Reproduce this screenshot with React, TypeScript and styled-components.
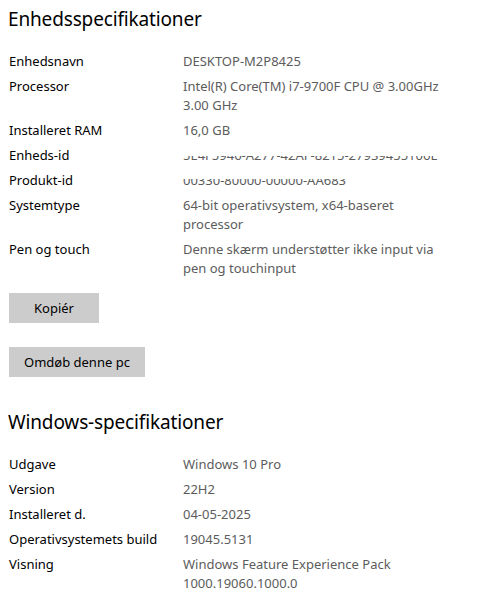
import React from 'react';
import styled, { createGlobalStyle } from 'styled-components';

const GlobalStyle = createGlobalStyle`
  html, body {
    margin: 0;
    padding: 0;
    background: #ffffff;
  }
  body {
    font-family: "Noto Sans", "Open Sans", sans-serif;
  }
`;

const Page = styled.div`
  width: 499px;
  height: 606px;
  overflow: hidden;
  padding: 5px 9px 0 9px;
  box-sizing: border-box;
  background: #fff;
`;

const Heading = styled.h2<{ $top?: number }>`
  margin: ${(p) => p.$top ?? 0}px 0 0 -1px;
  font-size: 19px;
  letter-spacing: -0.15px;
  font-weight: 400;
  line-height: 28px;
  color: #000;
`;

const SpecList = styled.div`
  display: flex;
  flex-direction: column;
  gap: 6px;
  margin-top: 19px;
`;

const Row = styled.div`
  display: grid;
  grid-template-columns: 174px 270px;
  font-size: 13px;
  line-height: 19px;
`;

const Label = styled.div`
  color: #000;
`;

const Value = styled.div<{ $hidden?: number }>`
  color: #5c5c5c;
  ${(p) => (p.$hidden ? `clip-path: inset(${p.$hidden}% 0 0 0);` : '')}
`;

const Buttons = styled.div`
  display: flex;
  flex-direction: column;
  align-items: flex-start;
  gap: 24px;
  margin-top: 15px;
`;

const Button = styled.button<{ $pad?: number }>`
  height: 30px;
  padding: 0 ${(p) => p.$pad ?? 15}px;
  background: #cccccc;
  border: none;
  border-radius: 0;
  font-family: "Noto Sans", "Open Sans", sans-serif;
  font-size: 13px;
  color: #000;
`;

type Spec = { label: string; value: string; hidden?: number };

const device: Spec[] = [
  { label: 'Enhedsnavn', value: 'DESKTOP-M2P8425' },
  { label: 'Processor', value: 'Intel(R) Core(TM) i7-9700F CPU @ 3.00GHz 3.00 GHz' },
  { label: 'Installeret RAM', value: '16,0 GB' },
  { label: 'Enheds-id', value: '5E4F5946-A277-42AF-8215-27939455106E', hidden: 52 },
  { label: 'Produkt-id', value: '00330-80000-00000-AA683', hidden: 42 },
  { label: 'Systemtype', value: '64-bit operativsystem, x64-baseret processor' },
  { label: 'Pen og touch', value: 'Denne skærm understøtter ikke input via pen og touchinput' },
];

const windows: Spec[] = [
  { label: 'Udgave', value: 'Windows 10 Pro' },
  { label: 'Version', value: '22H2' },
  { label: 'Installeret d.', value: '04-05-2025' },
  { label: 'Operativsystemets build', value: '19045.5131' },
  { label: 'Visning', value: 'Windows Feature Experience Pack 1000.19060.1000.0' },
];

const Specs = ({ items }: { items: Spec[] }) => (
  <SpecList>
    {items.map((s) => (
      <Row key={s.label}>
        <Label>{s.label}</Label>
        <Value $hidden={s.hidden}>{s.value}</Value>
      </Row>
    ))}
  </SpecList>
);

export default function App() {
  return (
    <>
      <GlobalStyle />
      <Page>
        <Heading>Enhedsspecifikationer</Heading>
        <Specs items={device} />
        <Buttons>
          <Button $pad={25}>Kopiér</Button>
          <Button>Omdøb denne pc</Button>
        </Buttons>
        <Heading $top={31}>Windows-specifikationer</Heading>
        <Specs items={windows} />
      </Page>
    </>
  );
}
